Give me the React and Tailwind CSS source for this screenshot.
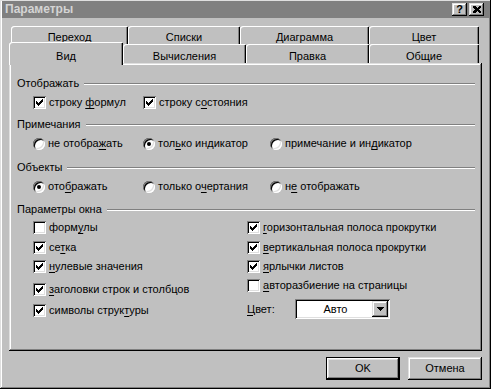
import React from "react";

const RAISED =
  "shadow-[inset_-1px_-1px_#000,inset_1px_1px_#dfdfdf,inset_-2px_-2px_#808080,inset_2px_2px_#fff]";
const SUNKEN =
  "shadow-[inset_1px_1px_#808080,inset_-1px_-1px_#fff,inset_2px_2px_#000,inset_-2px_-2px_#dfdfdf]";

function U({ children }) {
  return <span className="underline underline-offset-[2px] decoration-1">{children}</span>;
}

function CheckMark() {
  const rows = [2, 3, 4, 3, 2, 1, 0];
  return (
    <svg width="13" height="13" viewBox="0 0 13 13" shapeRendering="crispEdges" className="block">
      {rows.map((r, i) => (
        <rect key={i} x={3 + i} y={3 + r} width="1" height="3" fill="#000" />
      ))}
    </svg>
  );
}

function CheckBox({ checked }) {
  return (
    <span className={"shrink-0 w-[13px] h-[13px] bg-white " + SUNKEN}>
      {checked ? <CheckMark /> : null}
    </span>
  );
}

function Radio({ checked }) {
  return (
    <span className="shrink-0 w-[12px] h-[12px] rounded-full bg-white flex items-center justify-center shadow-[inset_1px_1px_#808080,inset_-1px_-1px_#fff,inset_2px_2px_#000,inset_-2px_-2px_#dfdfdf]">
      {checked ? <span className="w-[4px] h-[4px] rounded-full bg-black" /> : null}
    </span>
  );
}

function CB({ checked, children, className = "" }) {
  return (
    <div className={"flex items-center gap-[3px] h-[13px] whitespace-nowrap " + className}>
      <CheckBox checked={checked} />
      <span>{children}</span>
    </div>
  );
}

function RB({ checked, children, className = "" }) {
  return (
    <div className={"flex items-center gap-[3px] h-[13px] whitespace-nowrap " + className}>
      <Radio checked={checked} />
      <span>{children}</span>
    </div>
  );
}

function Group({ title, className = "" }) {
  return (
    <div className={"flex items-center gap-[5px] h-[13px] " + className}>
      <span className="whitespace-nowrap">{title}</span>
      <div className="flex-1 h-[2px] border-t border-t-[#808080] border-b border-b-white" />
    </div>
  );
}

function Tab({ label, className = "" }) {
  return (
    <div
      className={
        "flex justify-center pt-[5px] rounded-tl-[3px] rounded-tr-[1px] bg-[#c0c0c0] shadow-[inset_1px_1px_#fff,inset_-1px_0_#000,inset_-2px_0_#808080] " +
        className
      }
    >
      {label}
    </div>
  );
}

export default function App() {
  return (
    <div
      className={
        "w-[491px] h-[389px] bg-[#c0c0c0] flex flex-col overflow-hidden text-black text-[11px] leading-[13px] font-['Liberation_Sans',Arial,sans-serif] " +
        RAISED
      }
    >
      {/* Title bar */}
      <div className="mx-[2px] mt-[1px] h-[17px] bg-[#808080] flex items-center justify-between pl-[3px] pr-[5px]">
        <span className="font-bold text-[12px] text-[#d4d4d4]">Параметры</span>
        <div className="flex gap-[2px]">
          <div className={"w-[15px] h-[13px] bg-[#c0c0c0] flex items-center justify-center font-bold text-[11px] leading-[11px] " + RAISED}>
            ?
          </div>
          <div className={"w-[15px] h-[13px] bg-[#c0c0c0] flex items-center justify-center " + RAISED}>
            <svg width="8" height="7" viewBox="0 0 8 7" shapeRendering="crispEdges">
              <path d="M0 0h2l2 2 2-2h2v1L6 3.5 8 6v1H6L4 5 2 7H0V6l2-2.5L0 1z" fill="#000" />
            </svg>
          </div>
        </div>
      </div>

      {/* Tabs */}
      <div className="mt-[8px] flex pl-[11px] h-[18px]">
        <Tab label="Переход" className="w-[117px] h-[18px]" />
        <Tab label="Списки" className="w-[112px] h-[18px]" />
        <Tab label="Диаграмма" className="w-[129px] h-[18px]" />
        <Tab label="Цвет" className="w-[110px] h-[18px]" />
      </div>
      <div className="flex items-start pl-[9px] h-[19px]">
        <div className="relative z-10 -mt-[2px] w-[114px] h-[23px] flex justify-center pt-[8px] rounded-tl-[3px] rounded-tr-[1px] bg-[#c0c0c0] shadow-[inset_1px_1px_#fff,inset_-1px_0_#000,inset_-2px_0_#808080]">
          Вид
        </div>
        <div className="w-[123px] h-[19px] flex justify-center pt-[6px] rounded-tl-[3px] rounded-tr-[1px] bg-[#c0c0c0] shadow-[inset_1px_1px_#fff,inset_-1px_0_#000,inset_-2px_0_#808080]">
          Вычисления
        </div>
        <div className="w-[123px] h-[19px] flex justify-center pt-[6px] rounded-tl-[3px] rounded-tr-[1px] bg-[#c0c0c0] shadow-[inset_1px_1px_#fff,inset_-1px_0_#000,inset_-2px_0_#808080]">
          Правка
        </div>
        <div className="w-[110px] h-[19px] flex justify-center pt-[6px] rounded-tl-[3px] rounded-tr-[1px] bg-[#c0c0c0] shadow-[inset_1px_1px_#fff,inset_-1px_0_#000,inset_-2px_0_#808080]">
          Общие
        </div>
      </div>

      {/* Panel */}
      <div className={"ml-[9px] w-[473px] h-[288px] flex flex-col pl-[8px] pr-[7px] pt-[14px] " + RAISED}>
        <Group title="Отображать" />
        <div className="mt-[6px] flex ml-[16px]">
          <CB checked className="w-[110px]">
            строку <U>ф</U>ормул
          </CB>
          <CB checked>
            строку с<U>о</U>стояния
          </CB>
        </div>

        <Group title="Примечания" className="mt-[9px]" />
        <div className="mt-[6px] flex ml-[16px]">
          <RB className="w-[110px]">
            не отобра<U>ж</U>ать
          </RB>
          <RB checked className="w-[127px]">
            тол<U>ь</U>ко индикатор
          </RB>
          <RB>
            примечание и ин<U>д</U>икатор
          </RB>
        </div>

        <Group title="Объекты" className="mt-[11px]" />
        <div className="mt-[6px] flex ml-[16px]">
          <RB checked className="w-[110px]">
            ото<U>б</U>ражать
          </RB>
          <RB className="w-[127px]">
            только о<U>ч</U>ертания
          </RB>
          <RB>
            н<U>е</U> отображать
          </RB>
        </div>

        <Group title="Параметры окна" className="mt-[10px]" />
        <div className="mt-[5px] flex">
          <div className="ml-[16px] w-[214px] flex flex-col">
            <CB>
              форм<U>у</U>лы
            </CB>
            <CB checked className="mt-[7px]">
              се<U>т</U>ка
            </CB>
            <CB checked className="mt-[6px]">
              <U>н</U>улевые значения
            </CB>
            <CB checked className="mt-[10px]">
              <U>з</U>аголовки строк и столбцов
            </CB>
            <CB checked className="mt-[8px]">
              символы струк<U>т</U>уры
            </CB>
          </div>
          <div className="flex flex-col">
            <CB checked>
              <U>г</U>оризонтальная полоса прокрутки
            </CB>
            <CB checked className="mt-[7px]">
              <U>в</U>ертикальная полоса прокрутки
            </CB>
            <CB checked className="mt-[6px]">
              <U>я</U>рлычки листов
            </CB>
            <CB className="mt-[6px]">
              <U>а</U>вторазбиение на страницы
            </CB>
            <div className="mt-[7px] flex items-center h-[20px]">
              <span className="w-[48px]">
                <U>Ц</U>вет:
              </span>
              <div className={"w-[95px] h-[20px] bg-white flex p-[2px] " + SUNKEN}>
                <div className="flex-1 flex items-center justify-center pl-[2px]">Авто</div>
                <div className={"w-[16px] h-[16px] bg-[#c0c0c0] flex items-center justify-center " + RAISED}>
                  <svg width="7" height="4" viewBox="0 0 7 4" shapeRendering="crispEdges">
                    <path d="M0 0h7L3.5 4z" fill="#000" />
                  </svg>
                </div>
              </div>
            </div>
          </div>
        </div>
      </div>

      {/* Buttons */}
      <div className="mt-[6px] flex justify-end gap-[8px] pr-[9px]">
        <div className="w-[74px] h-[23px] flex items-center justify-center bg-[#c0c0c0] shadow-[inset_0_0_0_1px_#000,inset_-2px_-2px_#000,inset_2px_2px_#fff,inset_-3px_-3px_#808080,inset_3px_3px_#dfdfdf]">
          OK
        </div>
        <div className={"w-[74px] h-[23px] flex items-center justify-center bg-[#c0c0c0] " + RAISED}>
          Отмена
        </div>
      </div>
    </div>
  );
}
